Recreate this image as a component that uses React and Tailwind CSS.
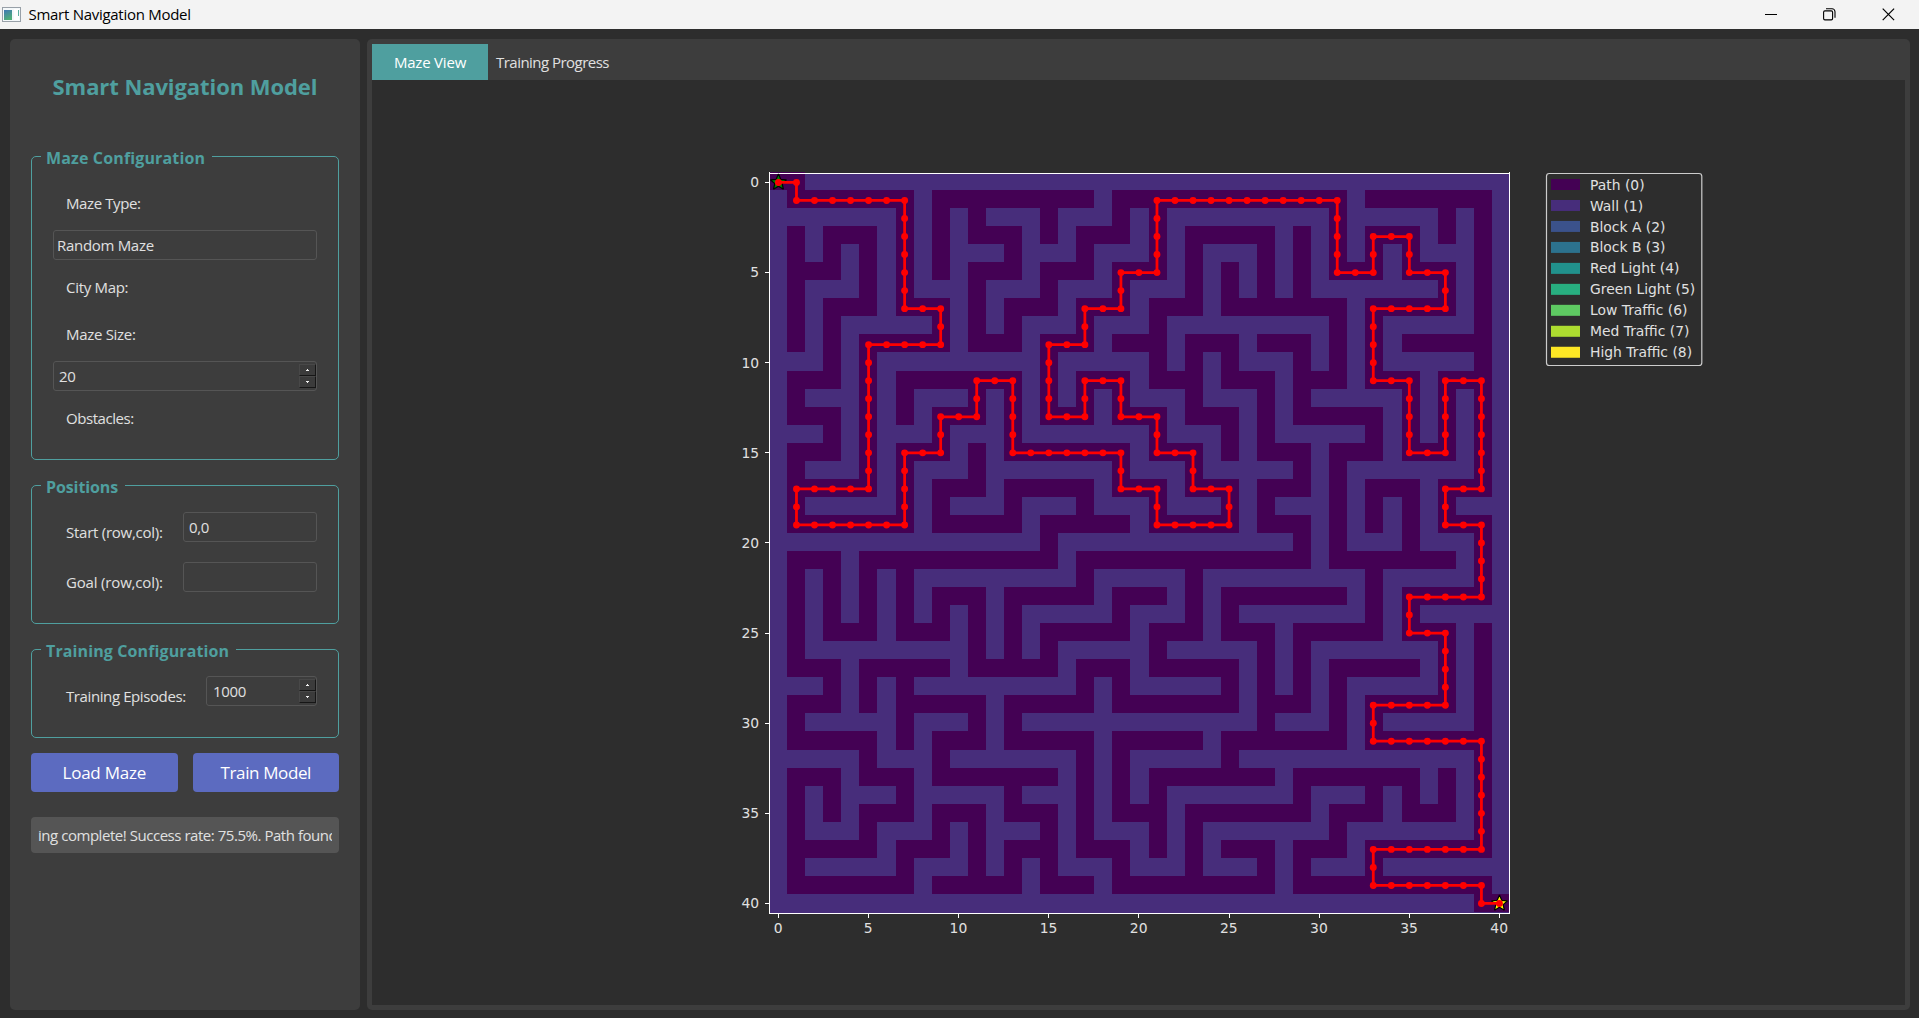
import React from 'react';

const OPEN = [
  '0-1',
  '1-7 9-17 19-31 33-39',
  '7 9 11 15 19 21 31 37 39',
  '1 3-5 7 9 11-13 15 17-19 21 23-27 29 31 33-35 37 39',
  '1 3 5 7 9 13 17 21 23 27 29 31 33 35 39',
  '1-3 5 7 9 11-13 15-17 19-21 23 25 27 29 31-33 35-37 39',
  '1 5 7 11 15 19 23 25 27 29 37 39',
  '1 3-5 7-9 11 13-15 17-19 21-23 25-31 33-37 39',
  '1 3 9 11 13 17 21 31 33 39',
  '1 3 5-9 11-13 15-17 19-21 23-25 27-29 31 33 35-39',
  '3 5 15 21 23 25 29 31 33 39',
  '1-3 5 7-13 15 17-19 21-23 25-27 29-31 33-35 37-39',
  '1 5 7 11 13 15 17 19 23 27 29 35 37 39',
  '1-3 5 7 9-11 13 15-17 19-21 23-25 27 29-33 35 37 39',
  '3 5 9 13 21 25 27 33 35 37 39',
  '1-3 5 7-9 11 13-19 21-23 25 27-29 31-33 35-37 39',
  '1 5 7 11 19 23 29 31 39',
  '1-5 7 9-11 13-17 19-21 23-25 27-29 31 33-35 37-39',
  '1 7 9 13 17 21 25 27 31 33 35 37',
  '1-7 9-13 15-19 21-25 27-29 31 33 35 37-39',
  '15 29 31 35 39',
  '1-3 5-15 17-29 31-37 39',
  '1 3 5 7 17 23 33 39',
  '1 3 5 7 9-11 13-17 19-21 23 25-31 33 35-39',
  '1 3 5 7 9 11 13 19 23 25 33 35',
  '1 3-5 7-9 11 13 15-19 21-23 25-27 29-33 35-37 39',
  '1 11 13 15 21 27 29 37 39',
  '1-3 5-9 11-15 17-19 21-25 27 29 31-35 37 39',
  '3 5 7 17 19 25 27 29 31 37 39',
  '1-3 5 7-11 13-17 19-25 27-29 31 33-37 39',
  '1 7 11 13 27 31 33 39',
  '1-5 7 9-11 13-17 19-23 25-31 33-39',
  '5 9 17 19 25 39',
  '1-3 5-7 9-15 17 19 21-27 29-35 37 39',
  '1 3 7 13 17 19 21 29 33 35 37 39',
  '1 3 5-7 9-11 13-15 17 19-21 23-29 31-33 35-37 39',
  '1 5 9 11 15 17 21 23 31 39',
  '1-5 7-9 11 13-15 17-19 21 23 25-27 29-31 33-39',
  '1 7 11 13 15 19 23 27 29 33',
  '1-7 9-13 15-17 19-27 29-39',
  '39-40',
].map((row) =>
  row.split(' ').map((run) => {
    const [a, b] = run.split('-').map(Number);
    return [a, b === undefined ? a : b];
  })
);

const ROUTE = [
  [0, 0], [1, 0], [1, 1], [7, 1], [7, 7], [9, 7], [9, 9], [5, 9], [5, 17], [1, 17], [1, 19], [7, 19],
  [7, 15], [9, 15], [9, 13], [11, 13], [11, 11], [13, 11], [13, 15], [19, 15], [19, 17], [21, 17],
  [21, 19], [25, 19], [25, 17], [23, 17], [23, 15], [21, 15], [21, 13], [19, 13], [19, 11], [17, 11],
  [17, 13], [15, 13], [15, 9], [17, 9], [17, 7], [19, 7], [19, 5], [21, 5], [21, 1], [31, 1], [31, 5],
  [33, 5], [33, 3], [35, 3], [35, 5], [37, 5], [37, 7], [33, 7], [33, 11], [35, 11], [35, 15], [37, 15],
  [37, 11], [39, 11], [39, 17], [37, 17], [37, 19], [39, 19], [39, 23], [35, 23], [35, 25], [37, 25],
  [37, 29], [33, 29], [33, 31], [39, 31], [39, 37], [33, 37], [33, 39], [39, 39], [39, 40], [40, 40],
];

const STEPS = ROUTE.flatMap(([x, y], i) => {
  if (i === 0) return [[x, y]];
  const [px, py] = ROUTE[i - 1];
  const n = Math.abs(x - px) + Math.abs(y - py);
  return Array.from({ length: n }, (_, k) => [
    px + (Math.sign(x - px) * (k + 1)),
    py + (Math.sign(y - py) * (k + 1)),
  ]);
});

const LEGEND = [
  ['Path (0)', '#440154'],
  ['Wall (1)', '#472d7b'],
  ['Block A (2)', '#3b528b'],
  ['Block B (3)', '#2c728e'],
  ['Red Light (4)', '#21918c'],
  ['Green Light (5)', '#28ae80'],
  ['Low Traffic (6)', '#5ec962'],
  ['Med Traffic (7)', '#addc30'],
  ['High Traffic (8)', '#fde725'],
];

const TICKS = [0, 5, 10, 15, 20, 25, 30, 35, 40];

const edgeX = (c) => (c === 0 ? 770 : 769 + 18 * c + Math.floor((c + 7) / 14));
const edgeY = (r) => 172 + 18 * r + (r >= 11 ? 1 : 0) + (r >= 32 ? 1 : 0);
const cx = (c) => 778.45 + c * 18.025;
const cy = (r) => 182.45 + r * 18.025;

function star(x, y) {
  return Array.from({ length: 10 }, (_, i) => {
    const rad = i % 2 ? 3.9 : 8.4;
    const a = (Math.PI / 5) * i;
    return `${(x + rad * Math.sin(a)).toFixed(2)},${(y - rad * Math.cos(a)).toFixed(2)}`;
  }).join(' ');
}

function MazePlot() {
  return (
    <svg
      viewBox="372 80 1533 925"
      className="block h-[925px] w-[1533px] font-['DejaVu_Sans',sans-serif] text-[13.89px] tracking-normal"
    >
      <rect x="770" y="174" width="739" height="739" fill="#472d7b" />
      <g fill="#440154" shapeRendering="crispEdges">
        {OPEN.map((runs, r) =>
          runs.map(([a, b]) => (
            <rect
              key={`${r}-${a}`}
              x={edgeX(a)}
              y={edgeY(r)}
              width={edgeX(b + 1) - edgeX(a)}
              height={edgeY(r + 1) - edgeY(r)}
            />
          ))
        )}
      </g>
      <g fill="#fff" shapeRendering="crispEdges">
        <rect x="769" y="172" width="1" height="742" />
        <rect x="1509" y="172" width="1" height="742" />
        <rect x="769" y="173" width="741" height="1" />
        <rect x="769" y="913" width="741" height="1" />
        {TICKS.map((t) => (
          <React.Fragment key={t}>
            <rect x={Math.floor(cx(t))} y="914" width="1" height="4" />
            <rect x="765" y={Math.floor(cy(t))} width="4" height="1" />
          </React.Fragment>
        ))}
      </g>
      <g fill="#e0e0e0">
        {TICKS.map((t) => (
          <React.Fragment key={t}>
            <text x={cx(t) - 0.3} y="933" textAnchor="middle">{t}</text>
            <text x="759.2" y={cy(t) + 4.8} textAnchor="end">{t}</text>
          </React.Fragment>
        ))}
      </g>
      <polygon points={star(cx(0), cy(0))} fill="#008000" stroke="#000" strokeWidth="1.2" strokeLinejoin="bevel" />
      <polygon points={star(cx(40), cy(40))} fill="#ffff00" stroke="#000" strokeWidth="1.2" strokeLinejoin="bevel" />
      <polyline
        points={ROUTE.map(([x, y]) => `${cx(x)},${cy(y)}`).join(' ')}
        fill="none"
        stroke="#f00"
        strokeWidth="2.78"
        strokeLinejoin="round"
      />
      <g fill="#f00">
        {STEPS.map(([x, y], i) => (
          <circle key={i} cx={cx(x)} cy={cy(y)} r="3.45" />
        ))}
      </g>
      <rect x="1546.5" y="173.5" width="155.3" height="192" rx="2.8" fill="#2d2d2d" stroke="#cccccc" strokeWidth="1.2" />
      {LEGEND.map(([name, color], i) => (
        <React.Fragment key={name}>
          <rect x="1551" y={179 + i * 20.97} width="29" height="11" fill={color} />
          <text x="1590" y={189.6 + i * 20.95} fill="#e0e0e0">{name}</text>
        </React.Fragment>
      ))}
    </svg>
  );
}

function Group({ title, titleClass, className, children }) {
  return (
    <section className={`relative w-[308px] rounded-[5px] border border-[#4f9f9f] ${className}`}>
      <h2
        className={`absolute -top-[9px] left-[9px] bg-[#3d3d3d] pr-[7px] pl-[5px] text-[16px] leading-[20px] font-bold whitespace-nowrap text-[#4f9f9f] ${titleClass}`}
      >
        {title}
      </h2>
      {children}
    </section>
  );
}

function SpinButtons({ className }) {
  return (
    <div className={`flex w-[17px] flex-col ${className}`}>
      {['M0 2h3V1H2V0H1v1H0z', 'M0 0h3v1H2v1H1V1H0z'].map((d) => (
        <div
          key={d}
          className="flex flex-1 items-center justify-center border-t border-r border-b border-l border-t-[#484848] border-r-[#161616] border-b-[#161616] border-l-[#484848] bg-[#3b3b3b]"
        >
          <svg width="3" height="2" viewBox="0 0 3 2" shapeRendering="crispEdges">
            <path d={d} fill="#f0f0f0" />
          </svg>
        </div>
      ))}
    </div>
  );
}

const FIELD = 'flex items-center rounded-[3px] border border-[#555555] bg-[#3d3d3d]';

export default function App() {
  return (
    <div className="flex h-[1018px] w-[1919px] flex-col overflow-hidden bg-[#2d2d2d] font-['Open_Sans',sans-serif] text-[15px] leading-[20px] tracking-[-0.3px] text-[#e0e0e0]">
      <header className="flex h-[29px] shrink-0 items-center bg-[#f3f3f3] text-black">
        <svg width="19" height="15" viewBox="0 0 19 15" className="ml-[2px]">
          <defs>
            <linearGradient id="appicon" x1="0" y1="0" x2="0.4" y2="1">
              <stop offset="0" stopColor="#3f78b5" />
              <stop offset="1" stopColor="#4fae78" />
            </linearGradient>
          </defs>
          <rect x="0.5" y="0.5" width="18" height="14" fill="#f4f8fa" stroke="#98a0a8" />
          <rect x="2" y="3" width="8" height="10" fill="url(#appicon)" />
          <rect x="12" y="2" width="5" height="11" fill="#fff" />
          <rect x="16" y="3" width="1" height="6" fill="#5fb0a0" />
        </svg>
        <span className="mb-[2px] ml-[7.5px] tracking-[-0.28px]">Smart Navigation Model</span>
        <div className="ml-auto flex items-center pr-[24px]">
          <svg width="12" height="12" viewBox="0 0 12 12" shapeRendering="crispEdges">
            <rect x="0" y="5" width="12" height="1" fill="#000" />
          </svg>
          <svg width="13" height="13" viewBox="0 0 13 13" className="ml-[46px]" fill="none" stroke="#000" strokeWidth="1.1">
            <rect x="0.6" y="2.9" width="9" height="9" rx="1.3" />
            <path d="M3 .8h6a3 3 0 0 1 3 3v6" />
          </svg>
          <svg width="13" height="13" viewBox="0 0 13 13" className="ml-[46px]" stroke="#000" strokeWidth="1.2">
            <path d="M.7.7l11.4 11.4M12.1.7L.7 12.1" />
          </svg>
        </div>
      </header>

      <main className="flex flex-1 gap-[7px] pt-[10px] pr-[9px] pb-[8px] pl-[10px]">
        <aside className="flex w-[350px] shrink-0 flex-col items-start rounded-[5px] bg-[#3d3d3d] pl-[21px]">
          <h1 className="mt-[32px] w-[308px] text-center text-[22px] leading-[30px] font-bold tracking-[-0.07px] text-[#4f9f9f]">
            Smart Navigation Model
          </h1>

          <Group title="Maze Configuration" titleClass="tracking-[0.14px]" className="mt-[55px] flex h-[304px] flex-col pl-[21px]">
            <span className="mt-[36px] ml-[13px] tracking-[-0.4px]">Maze Type:</span>
            <div className={`${FIELD} mt-[17px] h-[30px] w-[264px] pl-[3px]`}>Random Maze</div>
            <span className="mt-[17px] ml-[13px]">City Map:</span>
            <span className="mt-[27px] ml-[13px]">Maze Size:</span>
            <div className={`${FIELD} mt-[17px] h-[30px] w-[264px] justify-between pl-[5px]`}>
              20
              <SpinButtons className="h-[24px]" />
            </div>
            <span className="mt-[17px] ml-[13px] tracking-[-0.45px]">Obstacles:</span>
          </Group>

          <Group title="Positions" titleClass="tracking-[-0.1px]" className="mt-[25px] flex h-[139px] flex-col pt-[26px] pl-[34px]">
            <div className="flex h-[50px]">
              <span className="mt-[10px] w-[117px] tracking-[-0.25px]">Start (row,col):</span>
              <div className={`${FIELD} h-[30px] w-[134px] pl-[5px]`}>0,0</div>
            </div>
            <div className="flex h-[50px]">
              <span className="mt-[10px] w-[117px] tracking-[-0.17px]">Goal (row,col):</span>
              <div className={`${FIELD} h-[30px] w-[134px]`} />
            </div>
          </Group>

          <Group title="Training Configuration" titleClass="tracking-[0.12px]" className="mt-[25px] flex h-[89px] pt-[26px] pl-[34px]">
            <span className="mt-[10px] w-[140px] tracking-[-0.4px]">Training Episodes:</span>
            <div className={`${FIELD} h-[30px] w-[111px] justify-between pl-[6px]`}>
              1000
              <SpinButtons className="h-[24px]" />
            </div>
          </Group>

          <div className="mt-[15px] flex w-[308px] gap-[15px] text-[17px] text-white">
            <button className="h-[39px] flex-1 rounded-[4px] bg-[#5c6bc0] tracking-[-0.25px]">Load Maze</button>
            <button className="h-[39px] flex-1 rounded-[4px] bg-[#5c6bc0] tracking-[-0.38px]">Train Model</button>
          </div>

          <div className="mt-[25px] flex h-[36px] w-[308px] items-center rounded-[4px] bg-[#555555] px-[7px]">
            <div className="w-full overflow-hidden tracking-[-0.46px] whitespace-nowrap">
              ing complete! Success rate: 75.5%. Path found
            </div>
          </div>
        </aside>

        <section className="flex flex-1 flex-col rounded-[5px] bg-[#3d3d3d] p-[5px]">
          <nav className="flex h-[36px]">
            <div className="flex w-[116px] items-center justify-center bg-[#4f9f9f] tracking-[-0.2px] text-white">Maze View</div>
            <div className="flex items-center pl-[8px] tracking-[-0.53px]">Training Progress</div>
          </nav>
          <div className="flex-1 bg-[#2d2d2d]">
            <MazePlot />
          </div>
        </section>
      </main>
    </div>
  );
}
